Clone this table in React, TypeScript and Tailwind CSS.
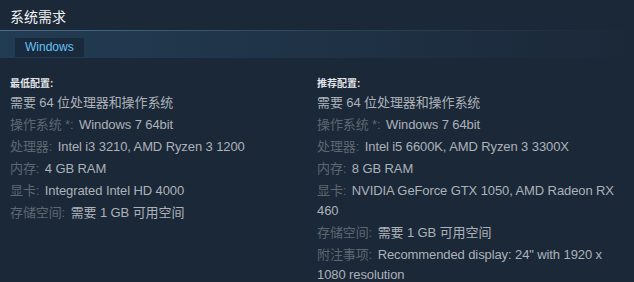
const MIN_SPECS: [string, string][] = [
  ["操作系统 *:", "Windows 7 64bit"],
  ["处理器:", "Intel i3 3210, AMD Ryzen 3 1200"],
  ["内存:", "4 GB RAM"],
  ["显卡:", "Integrated Intel HD 4000"],
  ["存储空间:", "需要 1 GB 可用空间"],
];

const REC_SPECS: [string, string][] = [
  ["操作系统 *:", "Windows 7 64bit"],
  ["处理器:", "Intel i5 6600K, AMD Ryzen 3 3300X"],
  ["内存:", "8 GB RAM"],
  ["显卡:", "NVIDIA GeForce GTX 1050, AMD Radeon RX 460"],
  ["存储空间:", "需要 1 GB 可用空间"],
  ["附注事项:", "Recommended display: 24\" with 1920 x 1080 resolution"],
];

function SpecColumn({ title, specs }: { title: string; specs: [string, string][] }) {
  return (
    <div>
      <div className="mb-[1px] text-[10px] font-bold leading-[16px] text-[#e3e6e9]">{title}</div>
      <ul className="text-[13px] leading-[20px] tracking-[-0.1px] text-[#acb2b8]">
        <li className="mb-[2px]">需要 64 位处理器和操作系统</li>
        {specs.map(([label, value]) => (
          <li key={label} className="mb-[2px]">
            <span className="mr-[2px] text-[#5c6772]">{label}</span> {value}
          </li>
        ))}
      </ul>
    </div>
  );
}

export default function App() {
  return (
    <div className="h-[282px] w-[634px] overflow-hidden bg-[#1b2838] font-['Liberation_Sans','Noto_Sans_CJK_SC',sans-serif]">
      <div className="px-[10px] pt-[8px]">
        <h2 className="text-[14px] leading-[18px] text-[#f2f4f6]">系统需求</h2>
      </div>
      <div className="mt-[4px] h-px bg-gradient-to-r from-[#4a6f8c] via-[#2d4659] to-transparent" />
      <div className="flex h-[27px] items-start bg-gradient-to-r from-[#223c53] via-[#1f3246] to-[#1b2838] pl-[15px] pt-[7px]">
        <div className="h-[19px] bg-[#182a3b] px-[10px] text-[12px] leading-[19px] text-[#67c1f5]">Windows</div>
      </div>
      <div className="grid grid-cols-[307px_1fr] pl-[10px] pr-[12px] pt-[18px]">
        <SpecColumn title="最低配置:" specs={MIN_SPECS} />
        <SpecColumn title="推荐配置:" specs={REC_SPECS} />
      </div>
    </div>
  );
}
